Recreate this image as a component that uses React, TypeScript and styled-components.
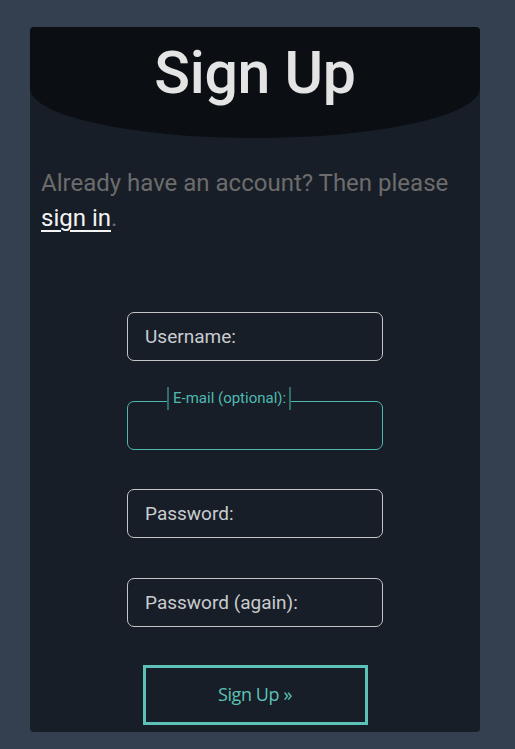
import React from "react";
import styled, { createGlobalStyle } from "styled-components";

const Global = createGlobalStyle`
  html, body { margin: 0; padding: 0; background: #343f4f; }
  body { font-family: Roboto, "Noto Sans", sans-serif; }
  * { box-sizing: border-box; }
`;

const Page = styled.div`
  padding: 27px 35px 17px 30px;
  min-height: 749px;
`;

const Card = styled.section`
  width: 450px;
  height: 705px;
  background: #181e27;
  border-radius: 4px;
  display: flex;
  flex-direction: column;
  overflow: hidden;
`;

const Header = styled.header`
  height: 111px;
  background: #0b0f14;
  border-radius: 4px 4px 50% 50% / 4px 4px 50px 50px;
  display: flex;
  justify-content: center;
`;

const Title = styled.h1`
  margin: 11px 0 0;
  font-family: Roboto, sans-serif;
  font-weight: 500;
  font-size: 59px;
  line-height: 69px;
  color: #e4e4e4;
  letter-spacing: -0.3px;
`;

const Intro = styled.p`
  margin: 28px 11px 0;
  font-size: 24px;
  line-height: 35px;
  color: #6c6c6c;
`;

const SignInLink = styled.a`
  color: #f4f4f4;
  text-decoration: underline;
  text-underline-offset: 4px;
  text-decoration-thickness: 2px;
`;

const Form = styled.form`
  margin-top: 76px;
  display: flex;
  flex-direction: column;
  align-items: center;
`;

const Fields = styled.div`
  display: flex;
  flex-direction: column;
  gap: 39.5px;
`;

const FieldWrap = styled.div`
  position: relative;
  width: 256px;
  height: 49px;
`;

const Input = styled.input<{ $active?: boolean }>`
  width: 100%;
  height: 100%;
  background: transparent;
  border: 1px solid ${(p) => (p.$active ? "#4fb9b1" : "#c4c4c4")};
  border-radius: 7px;
  outline: none;
  padding: 0 18px;
  color: #d0d0d0;
  font-family: Roboto, sans-serif;
  font-size: 19px;
`;

const InsideLabel = styled.label`
  position: absolute;
  left: 18px;
  top: 0;
  height: 49px;
  display: flex;
  align-items: center;
  font-family: Roboto, sans-serif;
  font-size: 19px;
  color: #c9ccd0;
  pointer-events: none;
`;

const FloatLabel = styled.label`
  position: absolute;
  left: 40px;
  top: -14px;
  height: 23px;
  padding: 0 3px 0 4px;
  display: flex;
  align-items: center;
  background: #181e27;
  border-left: 2px solid #2f6d6b;
  border-right: 2px solid #2f6d6b;
  font-family: Roboto, sans-serif;
  font-size: 15px;
  color: #4fb9b1;
  pointer-events: none;
`;

const Submit = styled.button`
  margin-top: 38px;
  width: 225px;
  height: 60px;
  background: transparent;
  border: 3px solid #5cc2b8;
  color: #5cc2b8;
  font-family: "Open Sans", Lato, sans-serif;
  font-size: 18px;
  letter-spacing: -0.4px;
  padding: 0 0 2px;
  cursor: pointer;
`;

type FieldProps = { id: string; label: string; type?: string; floating?: boolean };

function Field({ id, label, type = "text", floating }: FieldProps) {
  return (
    <FieldWrap>
      <Input id={id} type={type} $active={floating} />
      {floating ? (
        <FloatLabel htmlFor={id}>{label}</FloatLabel>
      ) : (
        <InsideLabel htmlFor={id}>{label}</InsideLabel>
      )}
    </FieldWrap>
  );
}

export default function App() {
  return (
    <>
      <Global />
      <Page>
        <Card>
          <Header>
            <Title>Sign Up</Title>
          </Header>
          <Intro>
            Already have an account? Then please <SignInLink href="#">sign in</SignInLink>.
          </Intro>
          <Form onSubmit={(e) => e.preventDefault()}>
            <Fields>
              <Field id="username" label="Username:" />
              <Field id="email" label="E-mail (optional):" type="email" floating />
              <Field id="password1" label="Password:" type="password" />
              <Field id="password2" label="Password (again):" type="password" />
            </Fields>
            <Submit type="submit">Sign Up »</Submit>
          </Form>
        </Card>
      </Page>
    </>
  );
}
